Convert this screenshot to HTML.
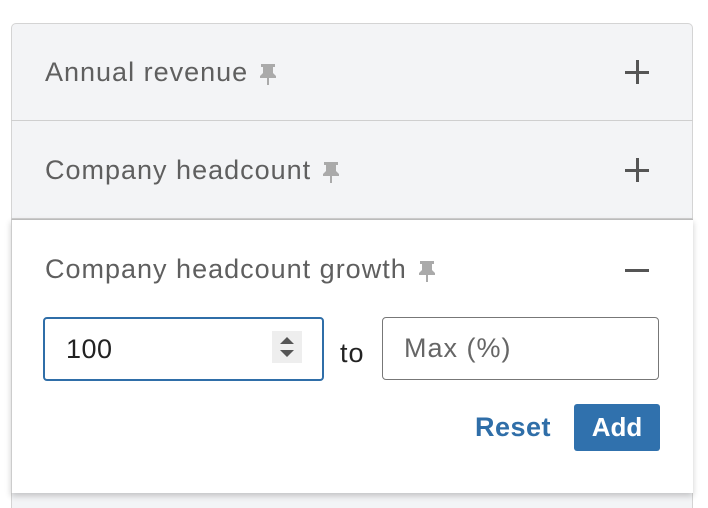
<!DOCTYPE html>
<html style="width:708px;height:508px;overflow:hidden"><head><style>
body{margin:0;width:708px;height:508px;background:#fff;font-family:"Liberation Sans",sans-serif;position:relative;overflow:hidden}
.card{position:absolute;left:11px;top:23px;width:680px;height:484px;background:#f3f4f6;border:1px solid #d4d4d4;border-bottom:none;border-radius:5px 5px 0 0}
.row{position:absolute;left:11px;width:682px;height:97px;border-bottom:1px solid #cfcfcf}
.lbl{position:absolute;left:34px;font-size:27px;letter-spacing:1px;color:#5f5f5f;white-space:nowrap}
.pin{display:inline-block;vertical-align:middle;margin-left:10px}
.plus{position:absolute;right:44px;width:24px;height:24px}
.plus:before{content:"";position:absolute;left:0;top:11px;width:24px;height:2.5px;background:#555}
.plus.p:after{content:"";position:absolute;left:11px;top:0;width:2.5px;height:24px;background:#555}
.panel{position:absolute;left:11px;top:219px;width:681px;height:273px;background:#fff;border-top:1px solid #bbb;border-left:1px solid #ccc;box-shadow:0 3px 6px rgba(0,0,0,.2)}
</style></head><body>
<div class="card"></div>
<div class="row" style="top:23px;height:97px"><div class="lbl" style="top:34px">Annual revenue<svg class="pin" width="20" height="24" viewBox="0 0 20 24"><path d="M3 2h14v3h-2v6l3 3v2H2v-2l3-3V5H3z M9 16h2v7H9z" fill="#aaa"/></svg></div><div class="plus p" style="top:37px"></div></div>
<div class="row" style="top:121px"><div class="lbl" style="top:34px">Company headcount<svg class="pin" width="20" height="24" viewBox="0 0 20 24"><path d="M3 2h14v3h-2v6l3 3v2H2v-2l3-3V5H3z M9 16h2v7H9z" fill="#aaa"/></svg></div><div class="plus p" style="top:37px"></div></div>
<div class="panel">
<div class="lbl" style="top:34px;left:33px">Company headcount growth<svg class="pin" width="20" height="24" viewBox="0 0 20 24"><path d="M3 2h14v3h-2v6l3 3v2H2v-2l3-3V5H3z M9 16h2v7H9z" fill="#aaa"/></svg></div>
<div class="plus" style="top:38px"></div>
<div style="position:absolute;left:31px;top:97px;width:277px;height:60px;border:2px solid #2f6ea8;border-radius:4px;box-sizing:content-box"><span style="position:absolute;left:21px;top:15px;font-size:27px;letter-spacing:.5px;color:#222">100</span>
<div style="position:absolute;left:227px;top:12px;width:30px;height:32px;background:#eee"><svg width="30" height="32"><path d="M8 13l7-7 7 7z M8 19l7 7 7-7z" fill="#555"/></svg></div></div>
<span style="position:absolute;left:328px;top:118px;font-size:27px;letter-spacing:1px;color:#222">to</span>
<div style="position:absolute;left:370px;top:97px;width:275px;height:61px;border:1.5px solid #777;border-radius:4px"><span style="position:absolute;left:21px;top:15px;font-size:27px;letter-spacing:1px;color:#666">Max (%)</span></div>
<span style="position:absolute;left:463px;top:192px;font-size:27px;letter-spacing:.5px;font-weight:bold;color:#2f6ea8">Reset</span>
<div style="position:absolute;left:562px;top:184px;width:86px;height:47px;background:#3071ad;border-radius:3px;color:#fff;font-weight:bold;font-size:26px;text-align:center;line-height:47px">Add</div>
</div>
</body></html>
